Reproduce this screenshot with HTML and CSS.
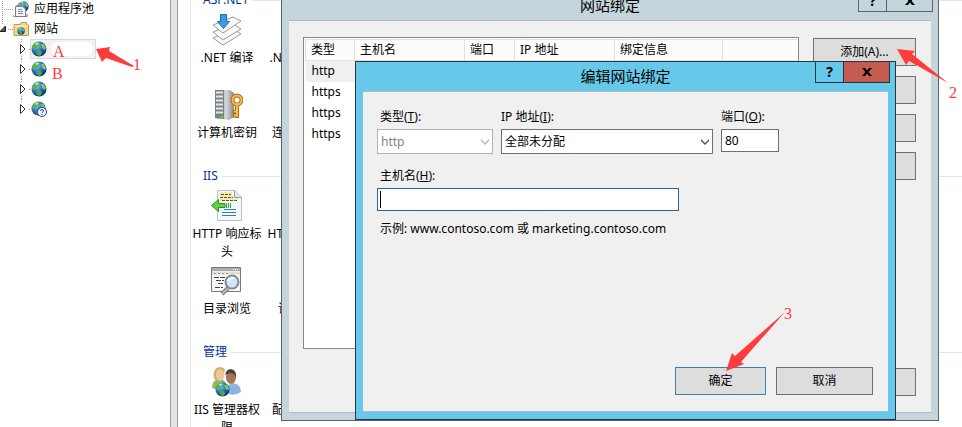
FILE: index.html
```html
<!DOCTYPE html>
<html lang="zh-CN">
<head>
  <meta charset="UTF-8" />
  <title>网站绑定</title>
  <link rel="stylesheet" href="styles.css">
</head>
<body>

  <svg width="0" height="0" class="defs">
    <defs>
      <radialGradient id="sea" cx="35%" cy="30%" r="75%">
        <stop offset="0" stop-color="#8cc2f4" />
        <stop offset="0.5" stop-color="#2a6fd0" />
        <stop offset="1" stop-color="#0a2a78" />
      </radialGradient>
      <linearGradient id="metal" x1="0" x2="1">
        <stop offset="0" stop-color="#8b8e91" />
        <stop offset="0.6" stop-color="#d4d6d8" />
        <stop offset="1" stop-color="#85888b" />
      </linearGradient>
      <symbol id="globe" viewBox="0 0 16 16">
        <circle cx="8" cy="8" r="7.5" fill="url(#sea)" />
        <path d="M2 4Q4 1 8 1L9 3L7 4L6 7L3 9L1 7Z" fill="#58b53f" />
        <path d="M10 3L13 3L15 7L14 9L11 7Z" fill="#7ccc4e" />
        <path d="M5 10L9 9L11 12L9 15L6 14Z" fill="#4cab3a" />
        <path d="M4 3Q6 1 8 2L6 4Z" fill="#d3f0c0" />
      </symbol>
    </defs>
  </svg>

  <nav class="tree">
    <ul>
      <li class="tree-row">
        <svg class="twist" viewBox="0 0 13 20"><path d="M2.500 0V20M4 10.500H13" stroke="#999" stroke-dasharray="1 1" /></svg>
        <svg class="small-icon" viewBox="0 0 16 16">
          <use href="#globe" x="5" y="0" width="11" height="11" />
          <path d="M5.500 3.500V2.500H9M3.500 5.500V4.500H7" fill="none" stroke="#888" />
          <path d="M2.500 5.500H9.500L12.500 8V15.500H2.500Z" fill="#f5f6f8" stroke="#7a808c" />
          <path d="M5 8.500H9M5 10.500H10M5 12.500H10" stroke="#6e93c4" />
          <path d="M0 14V16H4M11 16H14V13" fill="none" stroke="#c2483d" />
        </svg>
        <span>应用程序池</span>
      </li>
      <li class="tree-row">
        <svg class="twist" viewBox="0 0 13 20"><path d="M5.500 7V12.500H0Z" fill="#555" stroke="#222" /><path d="M2.500 0V5M8 10.500H13" stroke="#999" stroke-dasharray="1 1" /></svg>
        <svg class="small-icon" viewBox="0 0 16 16">
          <path d="M1 3.500H7L8 1.500H13.500V4H15.500V14.500H1Z" fill="#f2d988" stroke="#bd9a4b" />
          <path d="M2 5H15" stroke="#fff3c2" />
          <use href="#globe" x="4" y="6" width="8" height="8" />
        </svg>
        <span>网站</span>
      </li>
      <li class="tree-row child">
        <svg class="twist" viewBox="0 0 10 20"><path d="M.5 5.500L5 10L.5 14.500Z" fill="#fff" stroke="#333" /><path d="M1.500 0V4M1.500 17V20M9 10.500H10" stroke="#999" stroke-dasharray="1 1" /></svg>
        <span class="site selected">
          <svg class="small-icon" viewBox="0 0 16 16"><use href="#globe" width="16" height="16" /></svg>
          <span class="blank"></span>
        </span>
      </li>
      <li class="tree-row child">
        <svg class="twist" viewBox="0 0 10 20"><path d="M.5 5.500L5 10L.5 14.500Z" fill="#fff" stroke="#333" /><path d="M1.500 0V4M1.500 17V20M9 10.500H10" stroke="#999" stroke-dasharray="1 1" /></svg>
        <span class="site">
          <svg class="small-icon" viewBox="0 0 16 16"><use href="#globe" width="16" height="16" /></svg>
        </span>
      </li>
      <li class="tree-row child">
        <svg class="twist" viewBox="0 0 10 20"><path d="M.5 5.500L5 10L.5 14.500Z" fill="#fff" stroke="#333" /><path d="M1.500 0V4M1.500 17V20M9 10.500H10" stroke="#999" stroke-dasharray="1 1" /></svg>
        <span class="site">
          <svg class="small-icon" viewBox="0 0 16 16"><use href="#globe" width="16" height="16" /></svg>
        </span>
      </li>
      <li class="tree-row child">
        <svg class="twist" viewBox="0 0 10 20"><path d="M.5 5.500L5 10L.5 14.500Z" fill="#fff" stroke="#333" /><path d="M1.500 0V4M9 10.500H10" stroke="#999" stroke-dasharray="1 1" /></svg>
        <span class="site">
          <svg class="small-icon" viewBox="0 0 16 16">
            <use href="#globe" width="15" height="15" />
            <circle cx="11" cy="11" r="4.500" fill="#f4f8ff" stroke="#23409a" />
            <path d="M9.500 10Q9.500 8.500 11 8.500T12.500 10Q12.500 10.500 11 11.500V12M11 13V14" fill="none" stroke="#23409a" />
          </svg>
        </span>
      </li>
    </ul>
  </nav>

  <div class="splitter"></div>

  <main class="features">
    <section>
      <h2>ASP.NET</h2>
      <div class="items">
        <div class="item">
          <svg viewBox="0 0 32 32">
            <g fill="#fafafa" stroke="#999" stroke-linejoin="round">
              <path d="M2 24L22 15L30 20L12 31Z" />
              <path d="M2 18L22 10L30 15L12 26Z" />
              <path d="M2 11L22 3L30 7L12 19Z" />
            </g>
            <path d="M9.500 .5H15.500V7.500H18.500L12.500 14.500L6.500 7.500H9.500Z" fill="#3a9de2" stroke="#1b6cb4" />
          </svg>
          <span>.NET 编译</span>
        </div>
        <div class="item"><i></i><span>.NET 错误页</span></div>
      </div>
      <div class="items">
        <div class="item">
          <svg viewBox="0 0 32 32">
            <path d="M4 1H19L23 4V28L18 31L4 29Z" fill="url(#metal)" />
            <path d="M4 1H13V30L4 29Z" fill="#7d8084" />
            <path d="M5 3.500H12M5 7.500H12M5 11.500H12M5 15.500H12M5 19.500H12M5 23.500H12" stroke="#e4e6e8" stroke-width="2" />
            <path d="M9 27H12V30H9Z" fill="#4fd630" />
            <path d="M26 14V29M26 22.500H22M26 26.500H22" fill="none" stroke="#b36a10" stroke-width="4" />
            <circle cx="26" cy="11" r="4.500" fill="none" stroke="#b36a10" stroke-width="4" />
            <path d="M26 14V28M26 22.500H23M26 26.500H23" fill="none" stroke="#f8bd4e" stroke-width="2" />
            <circle cx="26" cy="11" r="4.500" fill="none" stroke="#f8bd4e" stroke-width="2" />
          </svg>
          <span>计算机密钥</span>
        </div>
        <div class="item"><i></i><span>连接字符串</span></div>
      </div>
    </section>

    <section>
      <h2>IIS</h2>
      <div class="items">
        <div class="item">
          <svg viewBox="0 0 32 32">
            <path d="M6.500 .5H24L30.500 7V30.500H6.500Z" fill="#f3f8fc" stroke="#b9c1c8" />
            <path d="M23.500 .5V7.500H30.500" fill="#dde4ea" stroke="#9aa3ab" />
            <path d="M9 3.500H21M9 6.500H22M9 9.500H27" stroke="#f5eaa0" stroke-width="3" />
            <path d="M10 4.500H20M9 7.500H22M11 10.500H26" stroke="#555" stroke-dasharray="3 1" />
            <path d="M13 19.500H25M11 22.500H25M11 25.500H25" stroke="#3a78c2" />
            <path d="M.5 15.500L7.500 9.500V13.500H14V17.500H7.500V21.500Z" fill="#5cd33c" stroke="#2d9120" />
            <path d="M15.500 13V18M17.500 13V18M19.500 13V18" stroke="#3bad2a" />
          </svg>
          <span>HTTP 响应标头</span>
        </div>
        <div class="item"><i></i><span>HTTP 重定向</span></div>
      </div>
      <div class="items">
        <div class="item">
          <svg viewBox="0 0 32 32">
            <path d="M.5 2.500H29.500V26.500H.5Z" fill="#f8f8f8" stroke="#777" />
            <path d="M1 4.500H29" stroke="#a7adb3" stroke-width="3" />
            <path d="M22 4.500H28" stroke="#fff" stroke-dasharray="1 1" />
            <path d="M1 8H29" stroke="#e4e0cf" stroke-width="3" />
            <path d="M3 8.500H18" stroke="#999" stroke-dasharray="2 2" />
            <path d="M3 12.500H14M5 15.500H13M7 18.500H13M4 22.500H12" stroke="#444" stroke-dasharray="5 1" />
            <path d="M17 23L11 29" stroke="#777" stroke-width="4" />
            <path d="M17 23L11 29" stroke="#bbb" stroke-width="2" />
            <circle cx="21" cy="17" r="6.500" fill="#cfe6fa" stroke="#7c8a96" stroke-width="2" />
            <path d="M17 16Q19 12 23 13" fill="none" stroke="#fff" stroke-width="2" />
          </svg>
          <span>目录浏览</span>
        </div>
        <div class="item"><i></i><span>请求筛选</span></div>
      </div>
    </section>

    <section>
      <h2>管理</h2>
      <div class="items">
        <div class="item">
          <svg viewBox="0 0 32 32">
            <path d="M1 22Q1 14 8 13Q15 13 16 21Q9 25 1 22Z" fill="#8dbb62" />
            <path d="M3 12Q1 2 9 1Q16 2 13 7L12 14H4Z" fill="#d6b35c" />
            <ellipse cx="9" cy="9" rx="4" ry="6" fill="#eec7a2" />
            <path d="M15 27Q15 18 22 17Q30 18 30 26Q23 31 15 27Z" fill="#8fb4e2" />
            <ellipse cx="20" cy="11" rx="5" ry="7" fill="#a9754f" />
            <path d="M14 9Q15 3 20 3Q26 4 25 12L23 8Q18 6 14 9Z" fill="#444" />
            <use href="#globe" x="4" y="16" width="15" height="15" />
          </svg>
          <span>IIS 管理器权限</span>
        </div>
        <div class="item"><i></i><span>配置编辑器</span></div>
      </div>
    </section>
  </main>

  <div class="window bindings">
    <header class="titlebar">
      <h1>网站绑定</h1>
      <div class="caption">
        <button class="help" aria-label="帮助">?</button>
        <button class="close" aria-label="关闭"><svg viewBox="0 0 10 8"><path d="M0 0H3L5 2.500L7 0H10L6.500 4L10 8H7L5 5.500L3 8H0L3.500 4Z" /></svg></button>
      </div>
    </header>
    <div class="client">
      <div class="list">
        <table>
          <thead>
            <tr><th class="c-type">类型</th><th class="c-host">主机名</th><th class="c-port">端口</th><th class="c-ip">IP 地址</th><th class="c-info">绑定信息</th><th></th></tr>
          </thead>
          <tbody>
            <tr class="current"><td colspan="6">http</td></tr>
            <tr><td colspan="6">https</td></tr>
            <tr><td colspan="6">https</td></tr>
            <tr><td colspan="6">https</td></tr>
          </tbody>
        </table>
      </div>
      <div class="actions">
        <button class="btn">添加(A)...</button>
        <button class="btn" aria-label="编辑"></button>
        <button class="btn" aria-label="删除"></button>
        <button class="btn" aria-label="浏览"></button>
        <button class="btn last" aria-label="关闭"></button>
      </div>
    </div>
  </div>

  <form class="window edit" onsubmit="return false">
    <header class="titlebar">
      <h1>编辑网站绑定</h1>
      <div class="caption">
        <button type="button" class="help" aria-label="帮助">?</button>
        <button type="button" class="close" aria-label="关闭"><svg viewBox="0 0 10 8"><path d="M0 0H3L5 2.500L7 0H10L6.500 4L10 8H7L5 5.500L3 8H0L3.500 4Z" /></svg></button>
      </div>
    </header>
    <div class="client">
      <div class="fields">
        <div class="field type">
          <label class="inset" for="type">类型(<u>T</u>):</label>
          <div class="combo disabled">
            <select id="type" disabled><option>http</option></select>
            <svg viewBox="0 0 8 6"><path d="M0 0L4 4L8 0V2L4 6L0 2Z" /></svg>
          </div>
        </div>
        <div class="field ip">
          <label for="ip">IP 地址(<u>I</u>):</label>
          <div class="combo">
            <select id="ip"><option>全部未分配</option></select>
            <svg viewBox="0 0 8 6"><path d="M0 0L4 4L8 0V2L4 6L0 2Z" /></svg>
          </div>
        </div>
        <div class="field port">
          <label for="port">端口(<u>O</u>):</label>
          <input id="port" type="text" value="80">
        </div>
      </div>
      <div class="field host">
        <label class="inset" for="host">主机名(<u>H</u>):</label>
        <div class="caret"><input id="host" type="text"></div>
      </div>
      <p class="hint inset">示例: www.contoso.com 或 marketing.contoso.com</p>
      <div class="dialog-buttons">
        <button class="btn default">确定</button>
        <button type="button" class="btn">取消</button>
      </div>
    </div>
  </form>

  <!-- step markers -->
  <svg class="arrows" width="962" height="427" viewBox="0 0 962 427">
    <path d="M96 49L110 47L109 51L134 66L132 67L106 58L102 62Z" />
    <path d="M897 49L915 51L912 54L948 83L909 61L906 65Z" />
    <path d="M726 371L732 353L735 356L785 312L741 362L744 364Z" />
  </svg>
  <span class="mark site-a">A</span>
  <span class="mark site-b">B</span>
  <span class="mark step-1">1</span>
  <span class="mark step-2">2</span>
  <span class="mark step-3">3</span>

</body>
</html>
```
FILE: styles.css
```css
* {
  box-sizing: border-box;
}

body {
  margin: 0;
  height: 100vh;
  display: flex;
  position: relative;
  overflow: hidden;
  background: #fff;
  color: #000;
  font: 12px/18px "Noto Sans", "Noto Sans CJK SC", sans-serif;
}

h1, h2, p, ul {
  margin: 0;
  padding: 0;
  font-weight: normal;
}

button, input, select {
  font: inherit;
  color: inherit;
  border-radius: 0;
}

svg {
  display: block;
  flex: none;
}

.defs {
  position: absolute;
}

/* site tree */
.tree {
  flex: none;
  width: 170px;
  margin-top: -1px;
}

.tree-row {
  display: flex;
  align-items: center;
  height: 20px;
}

.tree-row.child {
  padding-left: 20px;
}

.twist {
  width: 13px;
  height: 20px;
}

.small-icon {
  width: 16px;
  height: 16px;
  margin-right: 5px;
}

.child .twist {
  width: 10px;
}

.site {
  display: flex;
  align-items: center;
  width: 66px;
  height: 20px;
  border: 1px solid transparent;
}

.site .small-icon {
  margin-right: 4px;
}

.site.selected {
  background: #f2f2f2;
  border-color: #d9d9d9;
}

.blank {
  width: 42px;
  height: 14px;
  border-radius: 7px;
  background: #fff;
}

.splitter {
  flex: none;
  width: 8px;
  border: 1px solid #a0a0a0;
  border-width: 0 1px;
  background: #e4e2e2;
}

/* feature list */
.features {
  flex: 1;
  min-width: 0;
  margin: -9px 0 0 12px;
  border-left: 1px solid #ececf0;
}

.features section {
  margin-bottom: 7px;
}

.features h2 {
  display: flex;
  align-items: center;
  gap: 4px;
  padding-left: 12px;
  margin-bottom: 5px;
  font-size: 12px;
  color: #003399;
}

.features h2::after {
  content: "";
  flex: 1;
  height: 1px;
  background: #dfe6f2;
}

.items {
  display: flex;
  gap: 3px;
  margin-bottom: 4px;
}

.items:last-child {
  margin-bottom: 0;
}

.item {
  display: flex;
  flex-direction: column;
  align-items: center;
  gap: 3px;
  width: 72px;
  min-height: 71px;
  text-align: center;
}

.item svg,
.item i {
  width: 32px;
  height: 32px;
}

/* windows */
.window {
  position: absolute;
  display: flex;
  flex-direction: column;
  padding: 0 7px 7px;
  border: 1px solid #5c636c;
  background: #c4d6dc;
}

.bindings {
  left: 281px;
  top: -10px;
  width: 658px;
  height: 431px;
}

.edit {
  left: 355px;
  top: 61px;
  width: 541px;
  height: 359px;
  border-color: #26343c;
  background: #66c9e9;
}

.titlebar {
  position: relative;
  height: 29px;
  text-align: center;
}

.titlebar h1 {
  font-size: 15px;
  line-height: 28px;
}

.caption {
  position: absolute;
  top: -1px;
  right: -2px;
  display: flex;
}

.caption button {
  display: flex;
  align-items: center;
  justify-content: center;
  height: 22px;
  padding: 0;
  border: 1px solid #5c636c;
  background: none;
}

.caption .help {
  width: 29px;
  font-size: 14px;
  font-weight: bold;
}

.caption .close {
  width: 47px;
  margin-left: -1px;
}

.caption svg {
  width: 10px;
  height: 8px;
}

.edit .caption button {
  border-color: #26343c;
}

.edit .caption .close {
  background: #c45b51;
}

.client {
  flex: 1;
  display: flex;
  border-top: 1px solid #a9bcc8;
  border-bottom: 1px solid #a9bcc8;
  background: #f0f0f0;
}

.bindings .client {
  gap: 14px;
  padding: 16px 15px 16px 14px;
}

.list {
  flex: 1;
  height: 312px;
  padding: 1px;
  border: 1px solid #828790;
  background: #fff;
}

table {
  width: 100%;
  border-collapse: collapse;
  table-layout: fixed;
}

th {
  height: 21px;
  padding: 0 0 0 5px;
  border: 1px solid #e0e0e0;
  background: #fcfcfc;
  font-weight: normal;
  text-align: left;
}

th:last-child {
  border-right: none;
}

.c-type { width: 49px; }
.c-host { width: 110px; }
.c-port { width: 50px; }
.c-ip { width: 100px; }
.c-info { width: 108px; }

td {
  height: 21px;
  padding: 0 0 0 6px;
}

.current td {
  background: #f0f0f0;
}

.btn {
  height: 28px;
  padding: 0;
  border: 1px solid #707070;
  background: #ddd;
}

.btn.default {
  border-color: #3c7fb1;
}

.actions {
  display: flex;
  flex-direction: column;
  gap: 10px;
  width: 103px;
  padding-top: 1px;
}

.actions .last {
  margin-top: auto;
}

.edit .client {
  flex-direction: column;
  padding: 16px 15px 16px 14px;
}

.fields {
  display: flex;
  align-items: flex-start;
  gap: 8px;
  margin-bottom: 13px;
}

.field {
  display: flex;
  flex-direction: column;
  gap: 3px;
}

.type { width: 116px; }
.ip { width: 212px; }
.port { width: 58px; }
.host { width: 302px; }

.inset {
  padding-left: 3px;
}

.combo {
  position: relative;
}

.combo select {
  display: block;
  width: 100%;
  height: 25px;
  padding: 0 20px 0 3px;
  appearance: none;
  border: 1px solid #707070;
  background: #fff;
  opacity: 1;
}

.combo svg {
  position: absolute;
  right: 4px;
  top: 10px;
  width: 8px;
  height: 6px;
  fill: #555;
  pointer-events: none;
}

.combo.disabled select {
  border-color: #adb2b5;
  color: #838383;
}

.combo.disabled svg {
  fill: #b5b8ba;
}

.field input {
  display: block;
  width: 100%;
  height: 23px;
  padding: 0 3px;
  border: 1px solid #707070;
  background: #fff;
}

.caret {
  position: relative;
}

.caret input {
  border-color: #2a6496;
}

.caret::after {
  content: "";
  position: absolute;
  left: 3px;
  top: 3px;
  width: 1px;
  height: 17px;
  background: #000;
}

.hint {
  margin-top: 9px;
}

.dialog-buttons {
  display: flex;
  justify-content: flex-end;
  gap: 10px;
  margin-top: auto;
}

.dialog-buttons .btn {
  width: 97px;
}

.dialog-buttons .default {
  width: 91px;
}

/* step markers */
.arrows {
  position: absolute;
  left: 0;
  top: 0;
  fill: #ff3b3b;
  pointer-events: none;
}

.mark {
  position: absolute;
  color: #ff3b3b;
  font: 16px/18px "Liberation Serif", serif;
}

.site-a { left: 53px; top: 43px; }
.site-b { left: 52px; top: 65px; }
.step-1 { left: 133px; top: 56px; }
.step-2 { left: 949px; top: 84px; }
.step-3 { left: 784px; top: 305px; }
```
